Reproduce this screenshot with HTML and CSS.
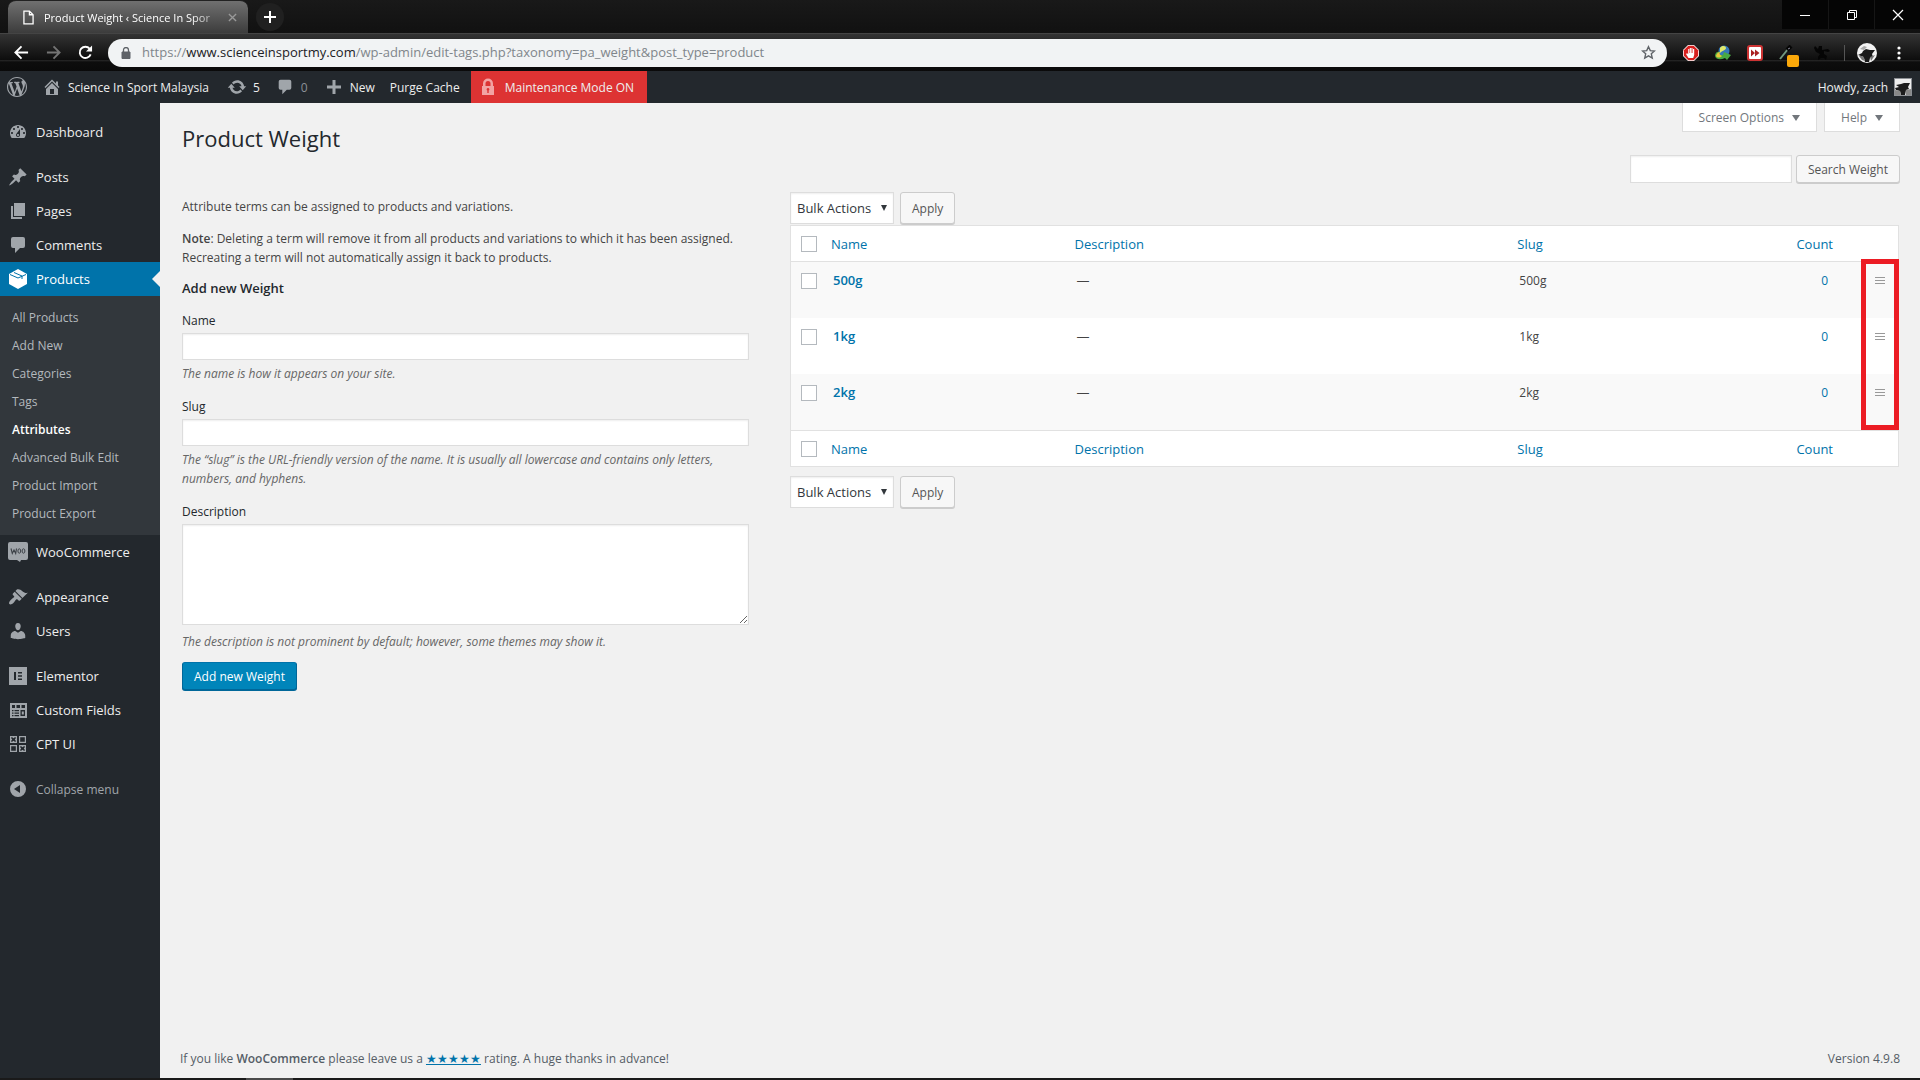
FILE: index.html
```html
<!DOCTYPE html>
<html lang="en">
<head>
<meta charset="utf-8">
<title>Product Weight ‹ Science In Sport Malaysia</title>
<link rel="stylesheet" href="styles.css">
</head>
<body>
<svg class="sprite" aria-hidden="true">
  <symbol id="i-comment" viewBox="0 0 20 20"><path d="M5 2h10a2 2 0 0 1 2 2v7a2 2 0 0 1-2 2h-3l-5 5v-5H5a2 2 0 0 1-2-2V4a2 2 0 0 1 2-2z"/></symbol>
</svg>

<header class="browser">
  <div class="tabstrip">
    <div class="tab">
      <svg class="tab-doc" viewBox="0 0 12 16"><path d="M1 1h6l4 4v10H1zM7 1v4h4" fill="none" stroke="#fff" stroke-width="1.4"/></svg>
      <span class="tab-title">Product Weight ‹ Science In Spor</span>
      <button class="plain tab-close" aria-label="Close tab"><svg viewBox="0 0 10 10"><path d="M1 1l8 8M9 1L1 9" stroke="#999" stroke-width="1.5"/></svg></button>
    </div>
    <button class="plain new-tab" aria-label="New tab"><svg viewBox="0 0 12 12"><path d="M6 0v12M0 6h12" stroke="#fff" stroke-width="2"/></svg></button>
    <div class="win">
      <button class="plain" aria-label="Minimize"><svg viewBox="0 0 12 12"><path d="M1 6.500h10" stroke="#fff"/></svg></button>
      <button class="plain" aria-label="Restore"><svg viewBox="0 0 12 12"><path d="M1.500 3.500h7v7h-7zM3.500 3.500v-2h7v7h-2" fill="none" stroke="#fff"/></svg></button>
      <button class="plain" aria-label="Close"><svg viewBox="0 0 12 12"><path d="M1 1l10 10M11 1L1 11" stroke="#fff" stroke-width="1.200"/></svg></button>
    </div>
  </div>
  <div class="toolbar">
    <div class="nav">
      <button class="plain" aria-label="Back"><svg viewBox="0 0 16 16"><path d="M15 8H2M8 1.500L1.500 8 8 14.500" fill="none" stroke="#fff" stroke-width="2"/></svg></button>
      <button class="plain" aria-label="Forward"><svg viewBox="0 0 16 16"><path d="M1 8h13M8 1.500L14.500 8 8 14.500" fill="none" stroke="#747474" stroke-width="2"/></svg></button>
      <button class="plain" aria-label="Reload"><svg viewBox="0 0 16 16"><path d="M13.500 10A6 6 0 1 1 12.500 4" fill="none" stroke="#fff" stroke-width="2"/><path d="M15 0.500v6.500H8.500z" fill="#fff"/></svg></button>
    </div>
    <div class="omnibox">
      <svg class="lock" viewBox="0 0 10 12"><path d="M1 5h8v6.500H1z" fill="#5f6368" stroke="#5f6368"/><path d="M2.500 5V3a2.500 2.500 0 0 1 5 0v2" fill="none" stroke="#5f6368" stroke-width="1.300"/></svg>
      <span class="url">https://<b>www.scienceinsportmy.com</b>/wp-admin/edit-tags.php?taxonomy=pa_weight&amp;post_type=product</span>
      <svg class="star" viewBox="0 0 16 16"><path d="M8 1.800l1.900 4.200 4.500.4-3.400 3 1 4.500L8 11.500l-4 2.400 1-4.500-3.400-3 4.500-.4z" fill="none" stroke="#5f6368" stroke-width="1.500"/></svg>
    </div>
    <div class="exts">
      <svg viewBox="0 0 16 16"><path d="M5 0h6l5 5v6l-5 5H5l-5-5V5z" fill="#fff"/><path d="M5.300.8h5.400l4.500 4.500v5.400l-4.500 4.500H5.300L.8 10.700V5.300z" fill="#d8201e"/><path d="M5.500 13L3 9l1-.8L5.200 9V4h1.100v4h.5V3h1.100v5h.5V3h1.100v5h.5V4h1.200v6l-1 3z" fill="#fff"/></svg>
      <svg viewBox="0 0 16 16"><circle cx="9" cy="6" r="5.500" fill="#3679b8"/><path d="M5 3c2-3 6-2 6 0S8 5 5 8z" fill="#dfe96b"/><path d="M0 11c0-4 3-5 5-4-2 2-1 3 3 3l1-3 7 3-4 5-2-2c-4 2-9 2-10-2z" fill="#49a942"/><path d="M1 11c1-4 4-4 4-4-1 2 0 3 2 4-2 2-5 2-6 0z" fill="#e8c63c"/></svg>
      <svg viewBox="0 0 16 16"><rect width="16" height="16" rx="3" fill="#c33"/><rect x="2" y="2" width="12" height="12" rx="1" fill="#fff"/><path d="M4 4.500L8 8l-4 3.500zM8 4.500L12.500 8 8 11.500z" fill="#a22"/></svg>
      <svg class="picker" viewBox="0 0 20 22"><path d="M1 14L9 4" stroke="#739a80" stroke-width="2"/><path d="M8 5l4-4" stroke="#050505" stroke-width="4"/><path d="M9 4l2-1" stroke="#889"/><rect x="8" y="10" width="12" height="12" rx="2" fill="#fca90a"/></svg>
      <svg viewBox="0 0 16 16"><path d="M1 1l3 3 1-3h3v4l6-1 2 2-2 1-4-1v3l3 2-1 4-2-2-3 0-3 2 0-3 2-3-4-2-2-4z" fill="#050505"/></svg>
      <span class="divider"></span>
      <svg class="face" viewBox="0 0 20 20"><circle cx="10" cy="10" r="10" fill="#f3f3f3"/><path d="M6 8l3-2 4 1 5 0-3 4 1 3-3 1-1 4H8l-1-4-3-2-3-1 4-2z" fill="#191919"/><path d="M2 13l4 0 2 5-3-1zM13 14l5-2-4 6z" fill="#777"/><path d="M3 6l4-3 3 1-3 3z" fill="#aaa"/></svg>
      <svg class="dots" viewBox="0 0 4 14"><circle cx="2" cy="2" r="1.600" fill="#fff"/><circle cx="2" cy="7" r="1.600" fill="#fff"/><circle cx="2" cy="12" r="1.600" fill="#fff"/></svg>
    </div>
  </div>
</header>

<nav class="adminbar" aria-label="Toolbar">
  <a href="#" class="wp" aria-label="About WordPress"><svg viewBox="0 0 20 20"><path d="M20 10c0-5.510-4.490-10-10-10C4.480 0 0 4.490 0 10c0 5.520 4.480 10 10 10 5.510 0 10-4.480 10-10zM7.780 15.370L4.370 6.220c.55-.02 1.170-.08 1.170-.08.5-.06.44-1.130-.06-1.110 0 0-1.450.11-2.370.11-.18 0-.37 0-.58-.01C4.120 2.690 6.870 1.110 10 1.110c2.330 0 4.450.87 6.050 2.340-.68-.11-1.650.39-1.650 1.580 0 .74.45 1.360.9 2.100.35.610.55 1.360.55 2.460 0 1.490-1.400 5-1.400 5l-3.030-8.370c.54-.02.82-.17.82-.17.5-.05.44-1.250-.06-1.220 0 0-1.440.12-2.380.12-.87 0-2.330-.12-2.330-.12-.5-.03-.56 1.200-.06 1.220l.92.08 1.260 3.410zM17.410 10c.24-.64.74-1.870.43-4.250.7 1.290 1.050 2.710 1.050 4.250 0 3.290-1.730 6.240-4.400 7.780.97-2.590 1.940-5.200 2.920-7.780zM6.100 18.090C3.120 16.650 1.110 13.530 1.110 10c0-1.300.23-2.480.72-3.590C3.250 10.300 4.670 14.200 6.100 18.090zm4.030-6.630l2.580 6.980c-.86.29-1.760.45-2.710.45-.79 0-1.570-.11-2.290-.33.81-2.380 1.620-4.740 2.420-7.100z"/></svg></a>
  <a href="#" class="site"><svg viewBox="0 0 20 20"><path d="M16 8.500l1.530 1.530-1.060 1.060L10 4.600l-6.470 6.490-1.060-1.060L10 2.500l4 4v-2h2v4zm-6-2.460l6 5.990V18H4v-5.970zM12 17v-5H8v5h4z"/></svg>Science In Sport Malaysia</a>
  <a href="#" class="updates"><svg viewBox="0 0 20 20"><path d="M10.200 3.280c3.530 0 6.430 2.610 6.920 6h2.080l-3.500 4-3.500-4h2.320c-.45-1.970-2.210-3.450-4.320-3.450-1.450 0-2.730.71-3.540 1.780L4.950 5.660C6.230 4.200 8.110 3.280 10.200 3.280zm-.4 13.440c-3.520 0-6.430-2.610-6.920-6H.8l3.500-4c1.170 1.330 2.330 2.670 3.500 4H5.480c.45 1.970 2.210 3.450 4.320 3.450 1.450 0 2.730-.71 3.540-1.780l1.710 1.950c-1.280 1.460-3.150 2.380-5.250 2.380z"/></svg>5</a>
  <a href="#" class="comments"><svg><use href="#i-comment"/></svg>0</a>
  <a href="#" class="new"><svg viewBox="0 0 20 20"><path d="M17 8.500v3h-5.500V17h-3v-5.500H3v-3h5.500V3h3v5.500z"/></svg>New</a>
  <a href="#" class="purge">Purge Cache</a>
  <a href="#" class="maint"><svg viewBox="0 0 20 20"><path fill-rule="evenodd" d="M4 9h1V6.500a5 5 0 0 1 10 0V9h1v9H4zm3.500 0h5V6.500a2.500 2.500 0 0 0-5 0zM10 11a1.400 1.400 0 0 0-.7 2.600V16h1.400v-2.400A1.400 1.400 0 0 0 10 11z"/></svg>Maintenance Mode ON</a>
  <a href="#" class="account">Howdy, zach <svg viewBox="0 0 18 18"><path d="M0 0h18v18H0z" fill="#8c8f94"/><path d="M1 1h16v16H1z" fill="#eee"/><path d="M2 7l5-1 3-1 6 0-2 4 1 2-3 1-1 5H7l-1-4-4-1-1-2 4-1z" fill="#1c1c1c"/><path d="M1 12l5 1 1 4H1zM12 12l5-1v6h-5z" fill="#888"/></svg></a>
</nav>

<div class="shell">
  <nav class="menu" aria-label="Main menu">
    <a href="#" class="item"><svg viewBox="0 0 20 20"><path fill-rule="evenodd" d="M3.760 16h12.480c1.100-1.370 1.760-3.110 1.760-5 0-4.420-3.580-8-8-8s-8 3.580-8 8c0 1.890.66 3.630 1.760 5zM10 4c.55 0 1 .45 1 1s-.45 1-1 1-1-.45-1-1 .45-1 1-1zM6 6c.55 0 1 .45 1 1s-.45 1-1 1-1-.45-1-1 .45-1 1-1zm8 0c.55 0 1 .45 1 1s-.45 1-1 1-1-.45-1-1 .45-1 1-1zm-5.370 5.550L12 7v6c0 1.100-.9 2-2 2s-2-.9-2-2c0-.57.24-1.080.63-1.450zM4 10c.55 0 1 .45 1 1s-.45 1-1 1-1-.45-1-1 .45-1 1-1zm12 0c.55 0 1 .45 1 1s-.45 1-1 1-1-.45-1-1 .45-1 1-1zm-5 3c0-.55-.45-1-1-1s-1 .45-1 1 .45 1 1 1 1-.45 1-1z"/></svg>Dashboard</a>
    <a href="#" class="item group"><svg viewBox="0 0 20 20"><path d="M10.440 3.020l1.820-1.820 6.360 6.350-1.830 1.820c-1.050-.68-2.480-.57-3.410.36l-.75.75c-.92.93-1.040 2.350-.35 3.410l-1.830 1.820-2.410-2.410-2.800 2.790c-.42.42-3.380 2.710-3.800 2.290s1.860-3.390 2.280-3.810l2.790-2.790L4.100 9.360l1.830-1.820c1.050.69 2.480.57 3.400-.36l.75-.75c.93-.92 1.050-2.350.36-3.410z"/></svg>Posts</a>
    <a href="#" class="item"><svg viewBox="0 0 20 20"><path d="M6 15V2h11v13H6zm-1 1h9v2H3V5h2v11z"/></svg>Pages</a>
    <a href="#" class="item"><svg><use href="#i-comment"/></svg>Comments</a>
    <a href="#" class="item current" aria-current="true"><svg viewBox="0 0 20 20"><path d="M10 0l9 5v10l-9 5-9-5V5z"/><path d="M2 5.500l8 3.500 8-3.500M6 3.500l8 3.500v3" fill="none" stroke="#0073aa"/></svg>Products</a>
    <ul class="submenu">
      <li><a href="#">All Products</a></li>
      <li><a href="#">Add New</a></li>
      <li><a href="#">Categories</a></li>
      <li><a href="#">Tags</a></li>
      <li><a href="#" class="on">Attributes</a></li>
      <li><a href="#">Advanced Bulk Edit</a></li>
      <li><a href="#">Product Import</a></li>
      <li><a href="#">Product Export</a></li>
    </ul>
    <a href="#" class="item"><svg viewBox="0 0 20 20"><path d="M2 0h16a2 2 0 0 1 2 2v14a2 2 0 0 1-2 2h-5l-1 2-3-2H2a2 2 0 0 1-2-2V2a2 2 0 0 1 2-2z"/><path d="M3 6.500l1.300 5L6 8l1.700 3.500L8.500 6.500" fill="none" stroke="#3c4147" stroke-width="1.100"/><ellipse cx="11.300" cy="9" rx="1.400" ry="2.200" fill="none" stroke="#3c4147"/><ellipse cx="15.500" cy="9" rx="1.400" ry="2.200" fill="none" stroke="#3c4147"/></svg>WooCommerce</a>
    <a href="#" class="item group"><svg viewBox="0 0 20 20"><path d="M14.480 11.060L7.410 3.990l1.500-1.500c.5-.56 2.300-.47 3.510.32 1.210.8 1.430 1.280 2.910 2.100 1.180.64 2.450 1.260 4.450.85zm-.71.71L6.700 4.700 4.930 6.470c-.39.39-.39 1.020 0 1.410l1.060 1.060c.39.39.39 1.030 0 1.420-.6.6-1.430 1.110-2.210 1.690-.35.26-.7.53-1.010.84C1.430 14.230.4 16.080 1.400 17.070c.99 1 2.840-.03 4.180-1.360.31-.31.58-.66.85-1.020.57-.78 1.080-1.610 1.690-2.210.39-.39 1.020-.39 1.410 0l1.060 1.060c.39.39 1.020.39 1.410 0z"/></svg>Appearance</a>
    <a href="#" class="item"><svg viewBox="0 0 20 20"><path d="M10 9.250c-2.270 0-2.730-3.440-2.730-3.440C7 4.020 7.820 2 9.970 2c2.160 0 2.980 2.020 2.710 3.810 0 0-.41 3.440-2.680 3.440zm0 2.570L12.720 10c2.390 0 4.520 2.330 4.520 4.530v2.490s-3.650 1.130-7.240 1.130c-3.650 0-7.240-1.130-7.240-1.130v-2.490c0-2.250 1.940-4.480 4.470-4.480z"/></svg>Users</a>
    <a href="#" class="item group"><svg viewBox="0 0 20 20"><path fill-rule="evenodd" d="M1 1h18v18H1zm5 5v8h2V6zm4 0v1.500h4V6zm0 3.200v1.600h4V9.200zm0 3.300V14h4v-1.500z"/></svg>Elementor</a>
    <a href="#" class="item"><svg viewBox="0 0 20 20"><path fill-rule="evenodd" d="M2 3h17v15H2zm2 2v3h3V5zm4.500 0v3h3.500V5zm5 0v3H17V5zM4 10v1.200h1.500V10zm2.500 0v1.200H11V10zM4 12.500v1.200h1.500v-1.200zm2.500 0v1.200H11v-1.200zM4 15v1.200h1.500V15zm2.500 0v1.200H11V15zM12.500 10v6H17v-6zm1.300 1.500h2v3h-2z"/></svg>Custom Fields</a>
    <a href="#" class="item"><svg viewBox="0 0 20 20"><path fill-rule="evenodd" d="M2 2h7v7H2zm1.200 1.200v1l1 1.300-1 1.300v1h1l1.300-1 1.300 1h1v-1l-1-1.300 1-1.300v-1h-1l-1.300 1-1.300-1zM11 2h7v7h-7zm1.200 1.200v4.600h4.600V3.200zM2 11h7v7H2zm1.200 1.200v4.600h4.600v-4.600zM11 11h7v7h-7zm1.200 1.200v1l1 1.300-1 1.300v1h1l1.300-1 1.300 1h1v-1l-1-1.300 1-1.300v-1h-1l-1.300 1-1.300-1z"/></svg>CPT UI</a>
    <button class="plain item group collapse"><svg viewBox="0 0 20 20"><path fill-rule="evenodd" d="M10 2a8 8 0 1 1 0 16 8 8 0 0 1 0-16zm2 4l-6 4 6 4z"/></svg>Collapse menu</button>
  </nav>

  <div class="content">
    <div class="top">
      <h1>Product Weight</h1>
      <div class="meta">
        <button class="plain meta-tab">Screen Options</button>
        <button class="plain meta-tab">Help</button>
      </div>
    </div>
    <form class="search">
      <input type="search" class="field" aria-label="Search Weight">
      <button type="button" class="btn">Search Weight</button>
    </form>

    <main class="columns">
      <section class="left">
        <p>Attribute terms can be assigned to products and variations.</p>
        <p><strong>Note</strong>: Deleting a term will remove it from all products and variations to which it has been assigned. Recreating a term will not automatically assign it back to products.</p>
        <h2>Add new Weight</h2>
        <form>
          <div class="row">
            <label for="name">Name</label>
            <input id="name" type="text" class="field">
            <p class="hint">The name is how it appears on your site.</p>
          </div>
          <div class="row">
            <label for="slug">Slug</label>
            <input id="slug" type="text" class="field">
            <p class="hint">The “slug” is the URL-friendly version of the name. It is usually all lowercase and contains only letters, numbers, and hyphens.</p>
          </div>
          <div class="row">
            <label for="desc">Description</label>
            <textarea id="desc" class="field"></textarea>
            <p class="hint">The description is not prominent by default; however, some themes may show it.</p>
          </div>
          <button type="button" class="btn primary">Add new Weight</button>
        </form>
      </section>

      <section class="right">
        <div class="bulk">
          <span class="drop"><select class="field" aria-label="Bulk action"><option>Bulk Actions</option></select></span>
          <button type="button" class="btn">Apply</button>
        </div>
        <div class="tablewrap">
          <table>
            <colgroup><col class="c-check"><col class="c-name"><col class="c-desc"><col class="c-slug"><col class="c-count"><col class="c-handle"></colgroup>
            <thead>
              <tr><td><input type="checkbox" aria-label="Select all"></td><th><a href="#">Name</a></th><th><a href="#">Description</a></th><th><a href="#">Slug</a></th><th class="num"><a href="#">Count</a></th><td></td></tr>
            </thead>
            <tbody>
              <tr><td><input type="checkbox" aria-label="Select 500g"></td><td><a href="#" class="term">500g</a></td><td class="dash">—</td><td>500g</td><td class="num"><a href="#">0</a></td><td class="handle"><svg viewBox="0 0 10 8"><path d="M0 .5h10M0 3.500h10M0 6.500h10"/></svg></td></tr>
              <tr><td><input type="checkbox" aria-label="Select 1kg"></td><td><a href="#" class="term">1kg</a></td><td class="dash">—</td><td>1kg</td><td class="num"><a href="#">0</a></td><td class="handle"><svg viewBox="0 0 10 8"><path d="M0 .5h10M0 3.500h10M0 6.500h10"/></svg></td></tr>
              <tr><td><input type="checkbox" aria-label="Select 2kg"></td><td><a href="#" class="term">2kg</a></td><td class="dash">—</td><td>2kg</td><td class="num"><a href="#">0</a></td><td class="handle"><svg viewBox="0 0 10 8"><path d="M0 .5h10M0 3.500h10M0 6.500h10"/></svg></td></tr>
            </tbody>
            <tfoot>
              <tr><td><input type="checkbox" aria-label="Select all, bottom"></td><th><a href="#">Name</a></th><th><a href="#">Description</a></th><th><a href="#">Slug</a></th><th class="num"><a href="#">Count</a></th><td></td></tr>
            </tfoot>
          </table>
          <div class="marker"></div>
        </div>
        <div class="bulk bottom">
          <span class="drop"><select class="field" aria-label="Bulk action, bottom"><option>Bulk Actions</option></select></span>
          <button type="button" class="btn">Apply</button>
        </div>
      </section>
    </main>

    <footer class="foot">
      <span>If you like <strong>WooCommerce</strong> please leave us a <a href="#">★★★★★</a> rating. A huge thanks in advance!</span>
      <span>Version 4.9.8</span>
    </footer>
  </div>
</div>
<div class="taskbar"><span></span></div>
</body>
</html>
```
FILE: styles.css
```css
* { box-sizing: border-box; }

body {
  margin: 0;
  min-height: 100vh;
  display: flex;
  flex-direction: column;
  background: #f1f1f1;
  color: #444;
  font: 12px/19px "Open Sans", "Noto Sans", sans-serif;
}

a { color: #0073aa; text-decoration: none; }
svg { display: block; flex: none; }
h1, h2, p, ul { margin: 0; padding: 0; }
strong { font-weight: 600; }
.sprite { position: absolute; width: 0; height: 0; }

.plain {
  border: 0;
  padding: 0;
  background: none;
  font: inherit;
  color: inherit;
  display: flex;
  align-items: center;
  justify-content: center;
}

/* Browser window */
.tabstrip {
  height: 33px;
  display: flex;
  background: linear-gradient(#191919, #111);
}
.tab {
  width: 240px;
  height: 33px;
  margin: 0 8px;
  padding: 0 11px 0 15px;
  display: flex;
  align-items: center;
  color: #fff;
  background: linear-gradient(#707070, #3c3c3c);
  border-radius: 8px 8px 0 0;
  border-top: 1px solid #222;
}
.tab-doc { width: 11px; height: 15px; }
.tab-title {
  flex: 1;
  margin-left: 10px;
  overflow: hidden;
  white-space: nowrap;
  font-size: 11px;
  mask-image: linear-gradient(90deg, #000 80%, transparent);
}
.tab-close svg { width: 9px; height: 9px; }
.new-tab {
  width: 28px;
  height: 28px;
  margin-top: 3px;
  border-radius: 50%;
  background: #202020;
}
.new-tab svg { width: 12px; height: 12px; }
.win { margin-left: auto; display: flex; height: 29px; background: #050505; }
.win button { width: 46px; }
.win button + button { border-left: 1px solid #161616; }
.win svg { width: 12px; height: 12px; }

.toolbar {
  height: 38px;
  display: flex;
  align-items: center;
  padding: 0 19px 0 14px;
  border-top: 1px solid #444;
  background: linear-gradient(#333, #0d0d0d 70%, #262626 71%, #0d0d0d 76%, #0a0a0a);
}
.nav { display: flex; gap: 17px; width: 94px; }
.nav svg { width: 15px; height: 15px; }
.omnibox {
  flex: 1;
  height: 28px;
  display: flex;
  align-items: center;
  padding: 0 11px 0 13px;
  border-radius: 14px;
  background: #f1f3f4;
  color: #80868b;
  font-size: 13px;
}
.lock { width: 10px; height: 12px; margin-right: 11px; }
.url { flex: 1; }
.url b { font-weight: 400; color: #202124; }
.star { width: 15px; height: 15px; }
.exts { display: flex; align-items: center; gap: 16px; padding-left: 16px; }
.exts svg { width: 16px; height: 16px; }
.exts .picker { width: 20px; height: 22px; margin: 6px -1px 0 0; }
.divider { width: 1px; height: 16px; background: #555; margin: 0 -4px 0 -2px; }
.exts .face { width: 20px; height: 20px; }
.exts .dots { width: 4px; height: 14px; margin-left: 4px; }

/* Admin bar */
.adminbar {
  height: 32px;
  display: flex;
  background: #23282d;
}
.adminbar a {
  display: flex;
  align-items: center;
  color: #eee;
}
.adminbar svg { width: 20px; height: 20px; fill: #a0a5aa; }
.wp { padding: 0 7px; width: 42px; }
.site { gap: 6px; }
.updates { margin-left: 18px; gap: 6px; }
.comments { margin-left: 15px; gap: 6px; }
.adminbar .comments { color: #8b9096; }
.comments svg { height: 18px; }
.new { margin-left: 16px; gap: 6px; }
.purge { padding: 0 11px 0 15px; }
.adminbar .maint { gap: 7px; padding: 0 13px 0 7px; background: #dd3333; }
.adminbar .maint svg { fill: #f2a3a3; }
.adminbar .account { margin-left: auto; gap: 6px; padding-right: 8px; }
.adminbar .account svg { width: 18px; height: 18px; }

/* Side menu */
.shell { flex: 1; display: flex; }
.menu { width: 160px; flex: none; padding-top: 12px; background: #23282d; }
.item {
  height: 34px;
  display: flex;
  align-items: center;
  justify-content: flex-start;
  gap: 8px;
  padding-left: 8px;
  color: #eee;
  font-size: 13px;
}
.item svg { width: 20px; height: 20px; fill: #a0a5aa; }
.group { margin-top: 11px; }
.current {
  position: relative;
  background: #0073aa;
  color: #fff;
}
.current svg { fill: #fff; }
.current::after {
  content: "";
  position: absolute;
  right: 0;
  top: 9px;
  border: 8px solid transparent;
  border-left: 0;
  border-right-color: #f1f1f1;
}
.submenu { list-style: none; padding: 8px 0 7px; background: #32373c; }
.submenu a { display: block; padding-left: 12px; line-height: 28px; color: #b4b9be; }
.submenu .on { color: #fff; font-weight: 600; }
.collapse { color: #a0a5aa; font-size: 12px; }

/* Content */
.content { flex: 1; padding: 0 20px 0 22px; display: flex; flex-direction: column; }
.top { display: flex; justify-content: space-between; height: 52px; }
h1 { padding-top: 20px; font-size: 22px; font-weight: 400; line-height: 30px; color: #23282d; }
.meta { display: flex; gap: 7px; }
.meta-tab {
  height: 29px;
  padding: 1px 16px 0;
  gap: 8px;
  border: 1px solid #ddd;
  border-top: 0;
  background: #fff;
  color: #72777c;
}
.meta-tab::after {
  content: "";
  border: 4px solid transparent;
  border-top: 6px solid #72777c;
  border-bottom: 0;
}

.field {
  height: 27px;
  margin: 0;
  border: 1px solid #ddd;
  border-radius: 0;
  outline: 0;
  background: #fff;
  box-shadow: inset 0 1px 2px rgba(0, 0, 0, .07);
  color: #32373c;
  font: inherit;
  appearance: none;
}
.btn {
  height: 28px;
  padding: 0 11px;
  border: 1px solid #ccc;
  border-radius: 3px;
  background: #f7f7f7;
  box-shadow: 0 1px 0 #ccc;
  color: #555;
  font: inherit;
}
.primary {
  background: #0085ba;
  border-color: #0073aa #006799 #006799;
  box-shadow: 0 1px 0 #006799;
  color: #fff;
}
.search { display: flex; justify-content: flex-end; gap: 4px; }
.search .field { width: 162px; height: 28px; }

.columns {
  display: grid;
  grid-template-columns: 567fr 1110fr;
  column-gap: 41px;
  align-items: start;
  padding-top: 9px;
}
.left { padding-top: 5px; }
.left > p { margin-bottom: 13px; }
h2 { margin: 0 0 14px; font-size: 13px; font-weight: 600; line-height: 16px; color: #23282d; }
.row { margin-bottom: 13px; }
.row label { display: block; line-height: 22px; color: #23282d; margin-bottom: 1px; }
.row .field { display: block; width: 100%; }
.row textarea.field { height: 101px; resize: vertical; }
.hint { padding-top: 4px; font-style: italic; color: #666; }
textarea + .hint { padding-top: 7px; }
.row:last-of-type { margin-bottom: 11px; }

.right { padding-right: 1px; }
.bulk { display: flex; gap: 6px; margin-bottom: 1px; }
.bulk .field, .bulk .btn { height: 32px; }
.drop { position: relative; display: block; }
.drop .field { width: 104px; padding: 1px 6px 0; font-size: 13px; }
.drop::after {
  content: "";
  position: absolute;
  right: 7px;
  top: 13px;
  border: 3px solid transparent;
  border-top: 6px solid #32373c;
  border-bottom: 0;
}
.bottom { margin: 9px 0 0; }

.tablewrap { position: relative; }
table {
  width: 100%;
  table-layout: fixed;
  border-collapse: separate;
  border-spacing: 0;
  border: 1px solid #e1e1e1;
  background: #fff;
}
.c-check { width: 32px; }
.c-name { width: 22%; }
.c-desc { width: 40%; }
.c-count { width: 84px; }
.c-handle { width: 36px; }
th, td { padding: 0 8px; text-align: left; font-weight: 400; }
th { font-size: 13px; padding-top: 1px; }
thead tr, tfoot tr { height: 36px; }
thead th, thead td { border-bottom: 1px solid #e1e1e1; }
tfoot th, tfoot td { border-top: 1px solid #e1e1e1; }
tbody td { height: 56px; padding: 9px 10px 0; vertical-align: top; }
tbody tr:nth-child(odd) { background: #f9f9f9; }
table td:first-child { padding-left: 10px; padding-right: 0; }
.term { font-size: 13px; font-weight: 600; }
.dash { font-size: 13px; }
th.num { text-align: right; padding-right: 29px; }
td.num { text-align: right; padding-right: 34px; }
table .handle { padding: 15px 13px 0; }
.handle svg { width: 10px; height: 8px; stroke: #999; }
input[type="checkbox"] {
  display: block;
  width: 16px;
  height: 16px;
  margin: 0;
  appearance: none;
  border: 1px solid #b4b9be;
  background: #fff;
}
tbody input[type="checkbox"] { margin-top: 2px; }
.marker {
  position: absolute;
  top: 34px;
  right: 0;
  bottom: 37px;
  width: 38px;
  border: 5px solid #ec1c24;
  pointer-events: none;
}

.foot { margin-top: auto; padding-bottom: 10px; display: flex; justify-content: space-between; color: #555d66; margin-left: -2px; }
.foot a { text-decoration: underline; }
.taskbar { height: 2px; background: #1a1a1a; }
.taskbar span { display: block; width: 47px; height: 2px; margin-left: 246px; background: #4a4a4a; }
```
